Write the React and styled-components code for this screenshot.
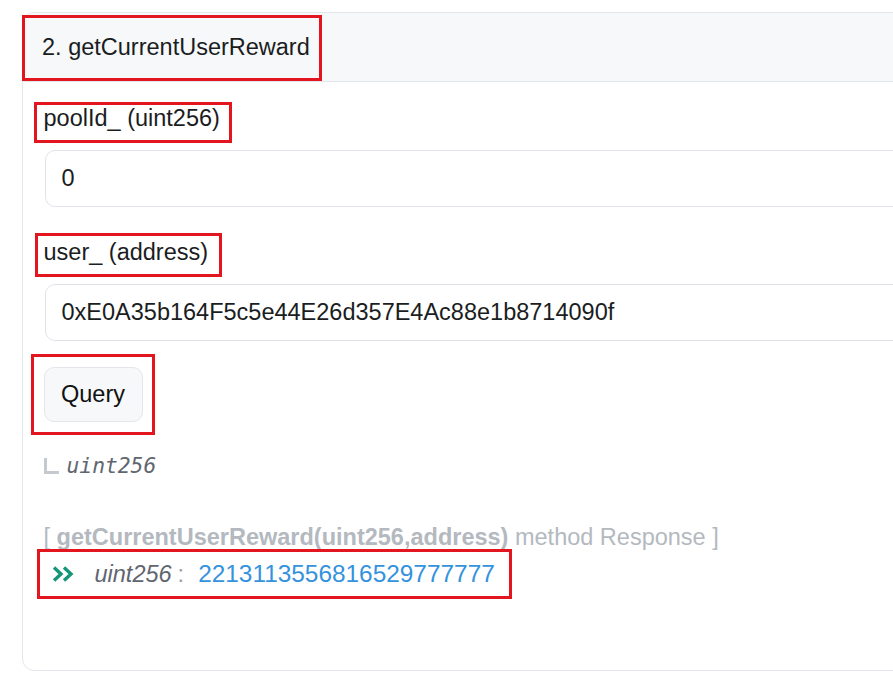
import React from "react";
import styled, { createGlobalStyle } from "styled-components";

const Global = createGlobalStyle`
  html, body { margin: 0; padding: 0; background: #fff; overflow: hidden; }
  body { font-family: "Liberation Sans", Arial, sans-serif; color: #212529; }
  * { box-sizing: border-box; }
`;

const Page = styled.div`
  padding: 12px 0 0 22px;
  width: 1000px;
`;

const Card = styled.section`
  border: 1.5px solid #e3e6ea;
  border-radius: 12px;
  height: 659px;
`;

const Header = styled.div`
  background: #f7f8fa;
  border-bottom: 1.5px solid #e3e6ea;
  border-radius: 12px 12px 0 0;
  height: 69px;
  display: flex;
  align-items: center;
  padding-left: 19px;
  font-size: 23.5px;
  color: #1a1d21;
`;

const Mark = styled.span`
  position: relative;
  display: inline-block;
  margin-top: ${(p) => p.$mt || 0}px;
  &::after {
    content: "";
    position: absolute;
    top: ${(p) => p.$t}px;
    right: ${(p) => p.$r}px;
    bottom: ${(p) => p.$b}px;
    left: ${(p) => p.$l}px;
    border: 3px solid #e3161f;
    pointer-events: none;
  }
`;

const Body = styled.div`
  padding: 23px 0 0 20.5px;
  display: flex;
  flex-direction: column;
  align-items: flex-start;
`;

const Label = styled.label`
  font-size: 23.5px;
  line-height: 27px;
  color: #1a1d21;
`;

const Input = styled.div`
  margin: 18px 0 0 1px;
  width: 900px;
  height: 57px;
  border: 1.5px solid #dfe3e8;
  border-radius: 10px;
  display: flex;
  align-items: center;
  padding-left: 16px;
  font-size: 23.5px;
  color: #1a1d21;
  margin-bottom: ${(p) => p.$mb}px;
`;

const Button = styled.button`
  width: 99px;
  height: 55px;
  background: #f7f8fa;
  border: 1.5px solid #e3e6ea;
  border-radius: 10px;
  font-family: "Liberation Sans", Arial, sans-serif;
  font-size: 23.5px;
  color: #111;
  padding: 0;
  cursor: pointer;
`;

const TypeLine = styled.div`
  margin-top: 30px;
  display: flex;
  align-items: center;
  gap: 8px;
  height: 26px;
`;

const Elbow = styled.span`
  width: 15px;
  height: 16px;
  border-left: 3px solid #c5cad0;
  border-bottom: 3px solid #c5cad0;
  margin-top: 1px;
`;

const MonoType = styled.span`
  font-family: "DejaVu Sans Mono", monospace;
  font-style: italic;
  font-size: 21.3px;
  color: #5f6670;
`;

const RespHead = styled.div`
  margin-top: 46px;
  font-size: 23.5px;
  color: #b3b9bf;
  line-height: 27px;
  b { font-weight: bold; }
`;

const RespRow = styled.div`
  margin-top: 9px;
  display: flex;
  align-items: center;
  height: 28px;
  font-size: 23.5px;
`;

const Chevron = styled.svg`
  width: 22px;
  height: 22px;
  margin-left: 8px;
  margin-right: 21px;
`;

const RType = styled.span`
  font-style: italic;
  color: #5f6670;
`;

const Colon = styled.span`
  color: #9aa1a8;
  margin: 0 14px 0 6px;
`;

const Value = styled.span`
  color: #3592dc;
  font-size: 24.4px;
`;

export default function App() {
  return (
    <>
      <Global />
      <Page>
        <Card>
          <Header>
            <Mark $t={-19} $r={-12} $b={-20} $l={-20}>2. getCurrentUserReward</Mark>
          </Header>
          <Body>
            <Mark $t={-3} $r={-12} $b={-11} $l={-10}>
              <Label>poolId_ (uint256)</Label>
            </Mark>
            <Input $mb={32}>0</Input>
            <Mark $t={-6} $r={-14} $b={-11} $l={-9}>
              <Label>user_ (address)</Label>
            </Mark>
            <Input $mb={0}>0xE0A35b164F5c5e44E26d357E4Ac88e1b8714090f</Input>
            <Mark $mt={26} $t={-13} $r={-12} $b={-13} $l={-13}>
              <Button>Query</Button>
            </Mark>
            <TypeLine>
              <Elbow />
              <MonoType>uint256</MonoType>
            </TypeLine>
            <RespHead>
              [ <b>getCurrentUserReward(uint256,address)</b> method Response ]
            </RespHead>
            <Mark $t={-2} $r={-17} $b={-11} $l={-7}>
              <RespRow>
                <Chevron viewBox="0 0 22 22" fill="none" stroke="#15967a" strokeWidth="3.4" strokeLinejoin="miter">
                  <polyline points="2,4.5 9,11 2,17.5" />
                  <polyline points="12,4.5 19,11 12,17.5" />
                </Chevron>
                <RType>uint256</RType>
                <Colon>:</Colon>
                <Value>2213113556816529777777</Value>
              </RespRow>
            </Mark>
          </Body>
        </Card>
      </Page>
    </>
  );
}
